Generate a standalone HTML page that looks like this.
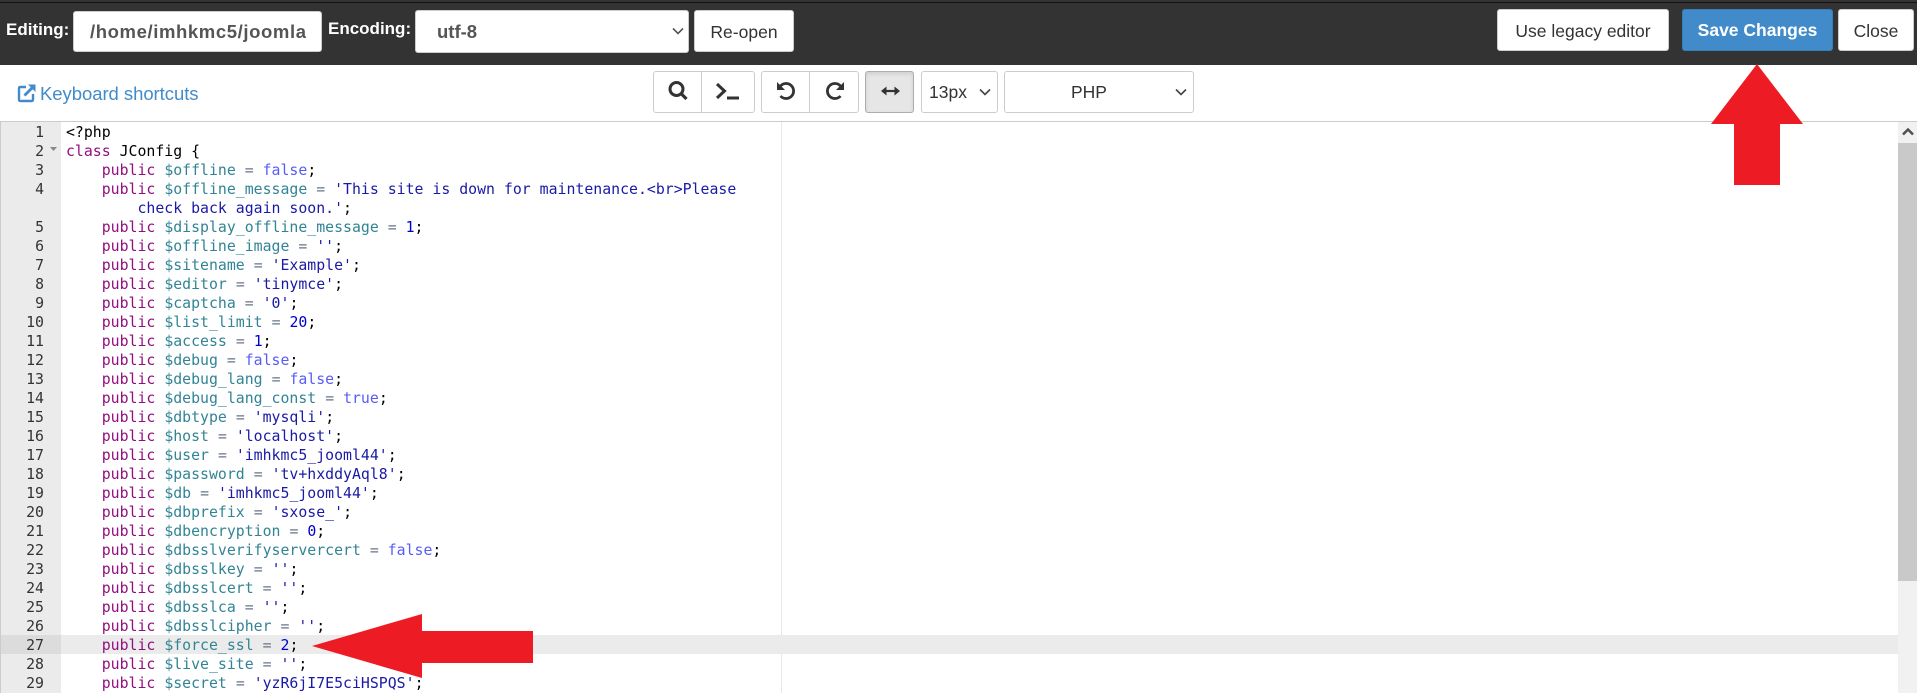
<!DOCTYPE html>
<html><head><meta charset="utf-8"><style>
html,body{margin:0;padding:0;width:1917px;height:693px;overflow:hidden;background:#fff}
*{box-sizing:border-box}
.a{position:absolute}
.s{font-family:"Liberation Sans",sans-serif;white-space:nowrap}
.w{background:#fff;border:1px solid #ccc;border-radius:3px}
.t{font-size:17.5px;line-height:42px;color:#333}
#ed{font-family:"DejaVu Sans Mono",monospace;font-size:14.85px;line-height:19px;white-space:pre;color:#000}
.r{position:absolute;left:66px;height:19px}
.n{position:absolute;left:0;width:44px;text-align:right;color:#333;height:19px}
.k{color:#930f80}.v{color:#318495}.o{color:#687687}.c{color:#585cf6}.q{color:#1a1aa6}.d{color:#0000cd}
</style></head><body>
<div class="a" style="left:0;top:0;width:1917px;height:65px;background:#333"></div>
<div class="a" style="left:0;top:2px;width:1917px;height:1px;background:#111"></div>

<div class="a s" style="left:6px;top:10px;font-size:17px;line-height:40px;font-weight:bold;color:#fff">Editing:</div>
<div class="a w" style="left:73px;top:11px;width:249px;height:41px"></div>
<div class="a s" style="left:90px;top:11px;width:216px;overflow:hidden;font-size:18.5px;line-height:41px;font-weight:bold;color:#555;letter-spacing:.6px">/home/imhkmc5/joomla/configuration.php</div>
<div class="a s" style="left:328px;top:9px;font-size:17px;line-height:40px;font-weight:bold;color:#fff">Encoding:</div>
<div class="a w" style="left:415px;top:10px;width:274px;height:43px"></div>
<div class="a s" style="left:437px;top:10px;font-size:18.5px;line-height:43px;font-weight:bold;color:#555">utf-8</div>
<svg class="a" style="left:672px;top:27px" width="12" height="8"><path d="M1 1.5L6 6.5L11 1.5" fill="none" stroke="#555" stroke-width="1.6"/></svg>
<div class="a w s t" style="left:694px;top:10px;width:100px;height:42px;text-align:center">Re-open</div>

<div class="a w s t" style="left:1497px;top:9px;width:172px;height:42px;text-align:center">Use legacy editor</div>
<div class="a s" style="left:1682px;top:9px;width:151px;height:42px;background:#428bca;border:1px solid #357ebd;border-radius:3px;color:#fff;font-size:17.5px;line-height:40px;font-weight:bold;text-align:center">Save Changes</div>
<div class="a w s t" style="left:1838px;top:9px;width:76px;height:42px;text-align:center">Close</div>

<svg class="a" style="left:17px;top:83px" width="20" height="20"><path d="M9 4H3.5C2.5 4 2 4.5 2 5.5V16.500C2 17.500 2.500 18 3.500 18H14.500C15.500 18 16 17.500 16 16.500V11" fill="none" stroke="#428bca" stroke-width="2.400"/><path d="M7.500 12.500L16 4" stroke="#428bca" stroke-width="2.800" fill="none"/><path d="M11 1.500H18.500V9Z" fill="#428bca"/></svg>
<div class="a s" style="left:40px;top:82px;font-size:18.5px;line-height:24px;color:#428bca;letter-spacing:-.05px">Keyboard shortcuts</div>

<div class="a w" style="left:653px;top:71px;width:102px;height:42px"></div>
<div class="a" style="left:701px;top:71px;width:1px;height:42px;background:#ccc"></div>
<div class="a w" style="left:761px;top:71px;width:98px;height:42px"></div>
<div class="a" style="left:809px;top:71px;width:1px;height:42px;background:#ccc"></div>
<div class="a" style="left:865px;top:71px;width:49px;height:42px;background:#e6e6e6;border:1px solid #adadad;border-radius:3px;box-shadow:inset 0 2px 4px rgba(0,0,0,.1)"></div>
<svg class="a" style="left:653px;top:71px" width="262" height="42" fill="none" stroke="#333">
<circle cx="23.500" cy="18" r="6.500" stroke-width="3"/><path d="M28.500 23L33.500 28" stroke-width="3.200"/>
<path d="M64 13L71.500 20L64 27" stroke-width="3"/><path d="M74 27H86" stroke-width="3"/>
<path d="M127.500 15A7.500 7.500 0 1 1 127.500 25" stroke-width="2.800"/><path d="M124 11V19H132Z" fill="#333" stroke="none"/>
<path d="M187.500 15A7.500 7.500 0 1 0 187.500 25" stroke-width="2.800"/><path d="M191 11V19H183Z" fill="#333" stroke="none"/>
<path d="M231 20H244" stroke-width="2.200"/><path d="M228 20L233.500 15.500V24.500Z M247 20L241.500 15.500V24.500Z" fill="#333" stroke="none"/>
</svg>
<div class="a w s" style="left:921px;top:71px;width:77px;height:42px;padding-left:7px;font-size:17.500px;line-height:40px;color:#333">13px</div>
<svg class="a" style="left:979px;top:88px" width="12" height="8"><path d="M1 1.500L6 6.500L11 1.500" fill="none" stroke="#444" stroke-width="1.600"/></svg>
<div class="a w s" style="left:1004px;top:71px;width:190px;height:42px;padding-left:66px;font-size:17.500px;line-height:40px;color:#333">PHP</div>
<svg class="a" style="left:1175px;top:88px" width="12" height="8"><path d="M1 1.500L6 6.500L11 1.500" fill="none" stroke="#444" stroke-width="1.600"/></svg>

<div class="a" style="left:0;top:121px;width:1917px;height:1px;background:#ccc"></div>
<div class="a" style="left:0;top:122px;width:61px;height:571px;background:#ebebeb"></div>
<div class="a" style="left:0;top:122px;width:1px;height:571px;background:#ccc"></div>
<div class="a" style="left:781px;top:122px;width:1px;height:571px;background:#e8e8e8"></div>
<div class="a" style="left:61px;top:635px;width:1837px;height:19px;background:#ebebeb"></div>
<div class="a" style="left:1px;top:635px;width:60px;height:19px;background:#dcdcdc"></div>

<div id="ed" class="a" style="left:0;top:1px;width:1898px;height:692px;overflow:hidden">
<div class="n" style="top:122px">1</div><div class="r" style="top:122px">&lt;?php</div>
<div class="n" style="top:141px">2</div><div class="r" style="top:141px"><span class="k">class</span> JConfig {</div>
<div class="n" style="top:160px">3</div><div class="r" style="top:160px">    <span class="k">public</span> <span class="v">$offline</span> <span class="o">=</span> <span class="c">false</span>;</div>
<div class="n" style="top:179px">4</div><div class="r" style="top:179px">    <span class="k">public</span> <span class="v">$offline_message</span> <span class="o">=</span> <span class="q">'This site is down for maintenance.&lt;br&gt;Please</span></div>
<div class="r" style="top:198px">        <span class="q">check back again soon.'</span>;</div>
<div class="n" style="top:217px">5</div><div class="r" style="top:217px">    <span class="k">public</span> <span class="v">$display_offline_message</span> <span class="o">=</span> <span class="d">1</span>;</div>
<div class="n" style="top:236px">6</div><div class="r" style="top:236px">    <span class="k">public</span> <span class="v">$offline_image</span> <span class="o">=</span> <span class="q">''</span>;</div>
<div class="n" style="top:255px">7</div><div class="r" style="top:255px">    <span class="k">public</span> <span class="v">$sitename</span> <span class="o">=</span> <span class="q">'Example'</span>;</div>
<div class="n" style="top:274px">8</div><div class="r" style="top:274px">    <span class="k">public</span> <span class="v">$editor</span> <span class="o">=</span> <span class="q">'tinymce'</span>;</div>
<div class="n" style="top:293px">9</div><div class="r" style="top:293px">    <span class="k">public</span> <span class="v">$captcha</span> <span class="o">=</span> <span class="q">'0'</span>;</div>
<div class="n" style="top:312px">10</div><div class="r" style="top:312px">    <span class="k">public</span> <span class="v">$list_limit</span> <span class="o">=</span> <span class="d">20</span>;</div>
<div class="n" style="top:331px">11</div><div class="r" style="top:331px">    <span class="k">public</span> <span class="v">$access</span> <span class="o">=</span> <span class="d">1</span>;</div>
<div class="n" style="top:350px">12</div><div class="r" style="top:350px">    <span class="k">public</span> <span class="v">$debug</span> <span class="o">=</span> <span class="c">false</span>;</div>
<div class="n" style="top:369px">13</div><div class="r" style="top:369px">    <span class="k">public</span> <span class="v">$debug_lang</span> <span class="o">=</span> <span class="c">false</span>;</div>
<div class="n" style="top:388px">14</div><div class="r" style="top:388px">    <span class="k">public</span> <span class="v">$debug_lang_const</span> <span class="o">=</span> <span class="c">true</span>;</div>
<div class="n" style="top:407px">15</div><div class="r" style="top:407px">    <span class="k">public</span> <span class="v">$dbtype</span> <span class="o">=</span> <span class="q">'mysqli'</span>;</div>
<div class="n" style="top:426px">16</div><div class="r" style="top:426px">    <span class="k">public</span> <span class="v">$host</span> <span class="o">=</span> <span class="q">'localhost'</span>;</div>
<div class="n" style="top:445px">17</div><div class="r" style="top:445px">    <span class="k">public</span> <span class="v">$user</span> <span class="o">=</span> <span class="q">'imhkmc5_jooml44'</span>;</div>
<div class="n" style="top:464px">18</div><div class="r" style="top:464px">    <span class="k">public</span> <span class="v">$password</span> <span class="o">=</span> <span class="q">'tv+hxddyAql8'</span>;</div>
<div class="n" style="top:483px">19</div><div class="r" style="top:483px">    <span class="k">public</span> <span class="v">$db</span> <span class="o">=</span> <span class="q">'imhkmc5_jooml44'</span>;</div>
<div class="n" style="top:502px">20</div><div class="r" style="top:502px">    <span class="k">public</span> <span class="v">$dbprefix</span> <span class="o">=</span> <span class="q">'sxose_'</span>;</div>
<div class="n" style="top:521px">21</div><div class="r" style="top:521px">    <span class="k">public</span> <span class="v">$dbencryption</span> <span class="o">=</span> <span class="d">0</span>;</div>
<div class="n" style="top:540px">22</div><div class="r" style="top:540px">    <span class="k">public</span> <span class="v">$dbsslverifyservercert</span> <span class="o">=</span> <span class="c">false</span>;</div>
<div class="n" style="top:559px">23</div><div class="r" style="top:559px">    <span class="k">public</span> <span class="v">$dbsslkey</span> <span class="o">=</span> <span class="q">''</span>;</div>
<div class="n" style="top:578px">24</div><div class="r" style="top:578px">    <span class="k">public</span> <span class="v">$dbsslcert</span> <span class="o">=</span> <span class="q">''</span>;</div>
<div class="n" style="top:597px">25</div><div class="r" style="top:597px">    <span class="k">public</span> <span class="v">$dbsslca</span> <span class="o">=</span> <span class="q">''</span>;</div>
<div class="n" style="top:616px">26</div><div class="r" style="top:616px">    <span class="k">public</span> <span class="v">$dbsslcipher</span> <span class="o">=</span> <span class="q">''</span>;</div>
<div class="n" style="top:635px">27</div><div class="r" style="top:635px">    <span class="k">public</span> <span class="v">$force_ssl</span> <span class="o">=</span> <span class="d">2</span>;</div>
<div class="n" style="top:654px">28</div><div class="r" style="top:654px">    <span class="k">public</span> <span class="v">$live_site</span> <span class="o">=</span> <span class="q">''</span>;</div>
<div class="n" style="top:673px">29</div><div class="r" style="top:673px">    <span class="k">public</span> <span class="v">$secret</span> <span class="o">=</span> <span class="q">'yzR6jI7E5ciHSPQS'</span>;</div>
</div>
<svg class="a" style="left:49px;top:146px" width="9" height="6"><path d="M1 1H8L4.500 5Z" fill="#888"/></svg>

<div class="a" style="left:1898px;top:122px;width:19px;height:571px;background:#f1f1f1"></div>
<div class="a" style="left:1898px;top:143px;width:19px;height:438px;background:#c9c9c9"></div>
<svg class="a" style="left:1902px;top:127px" width="12" height="9"><path d="M1 7.500L6 2.500L11 7.500" fill="none" stroke="#505050" stroke-width="2.500"/></svg>

<svg class="a" style="left:0;top:0" width="1917" height="693"><path d="M1757 64L1803 124H1780V185H1734V124H1711Z M312 646L422 614V631H533V663H422V678Z" fill="#ed1c24"/></svg>
</body></html>
